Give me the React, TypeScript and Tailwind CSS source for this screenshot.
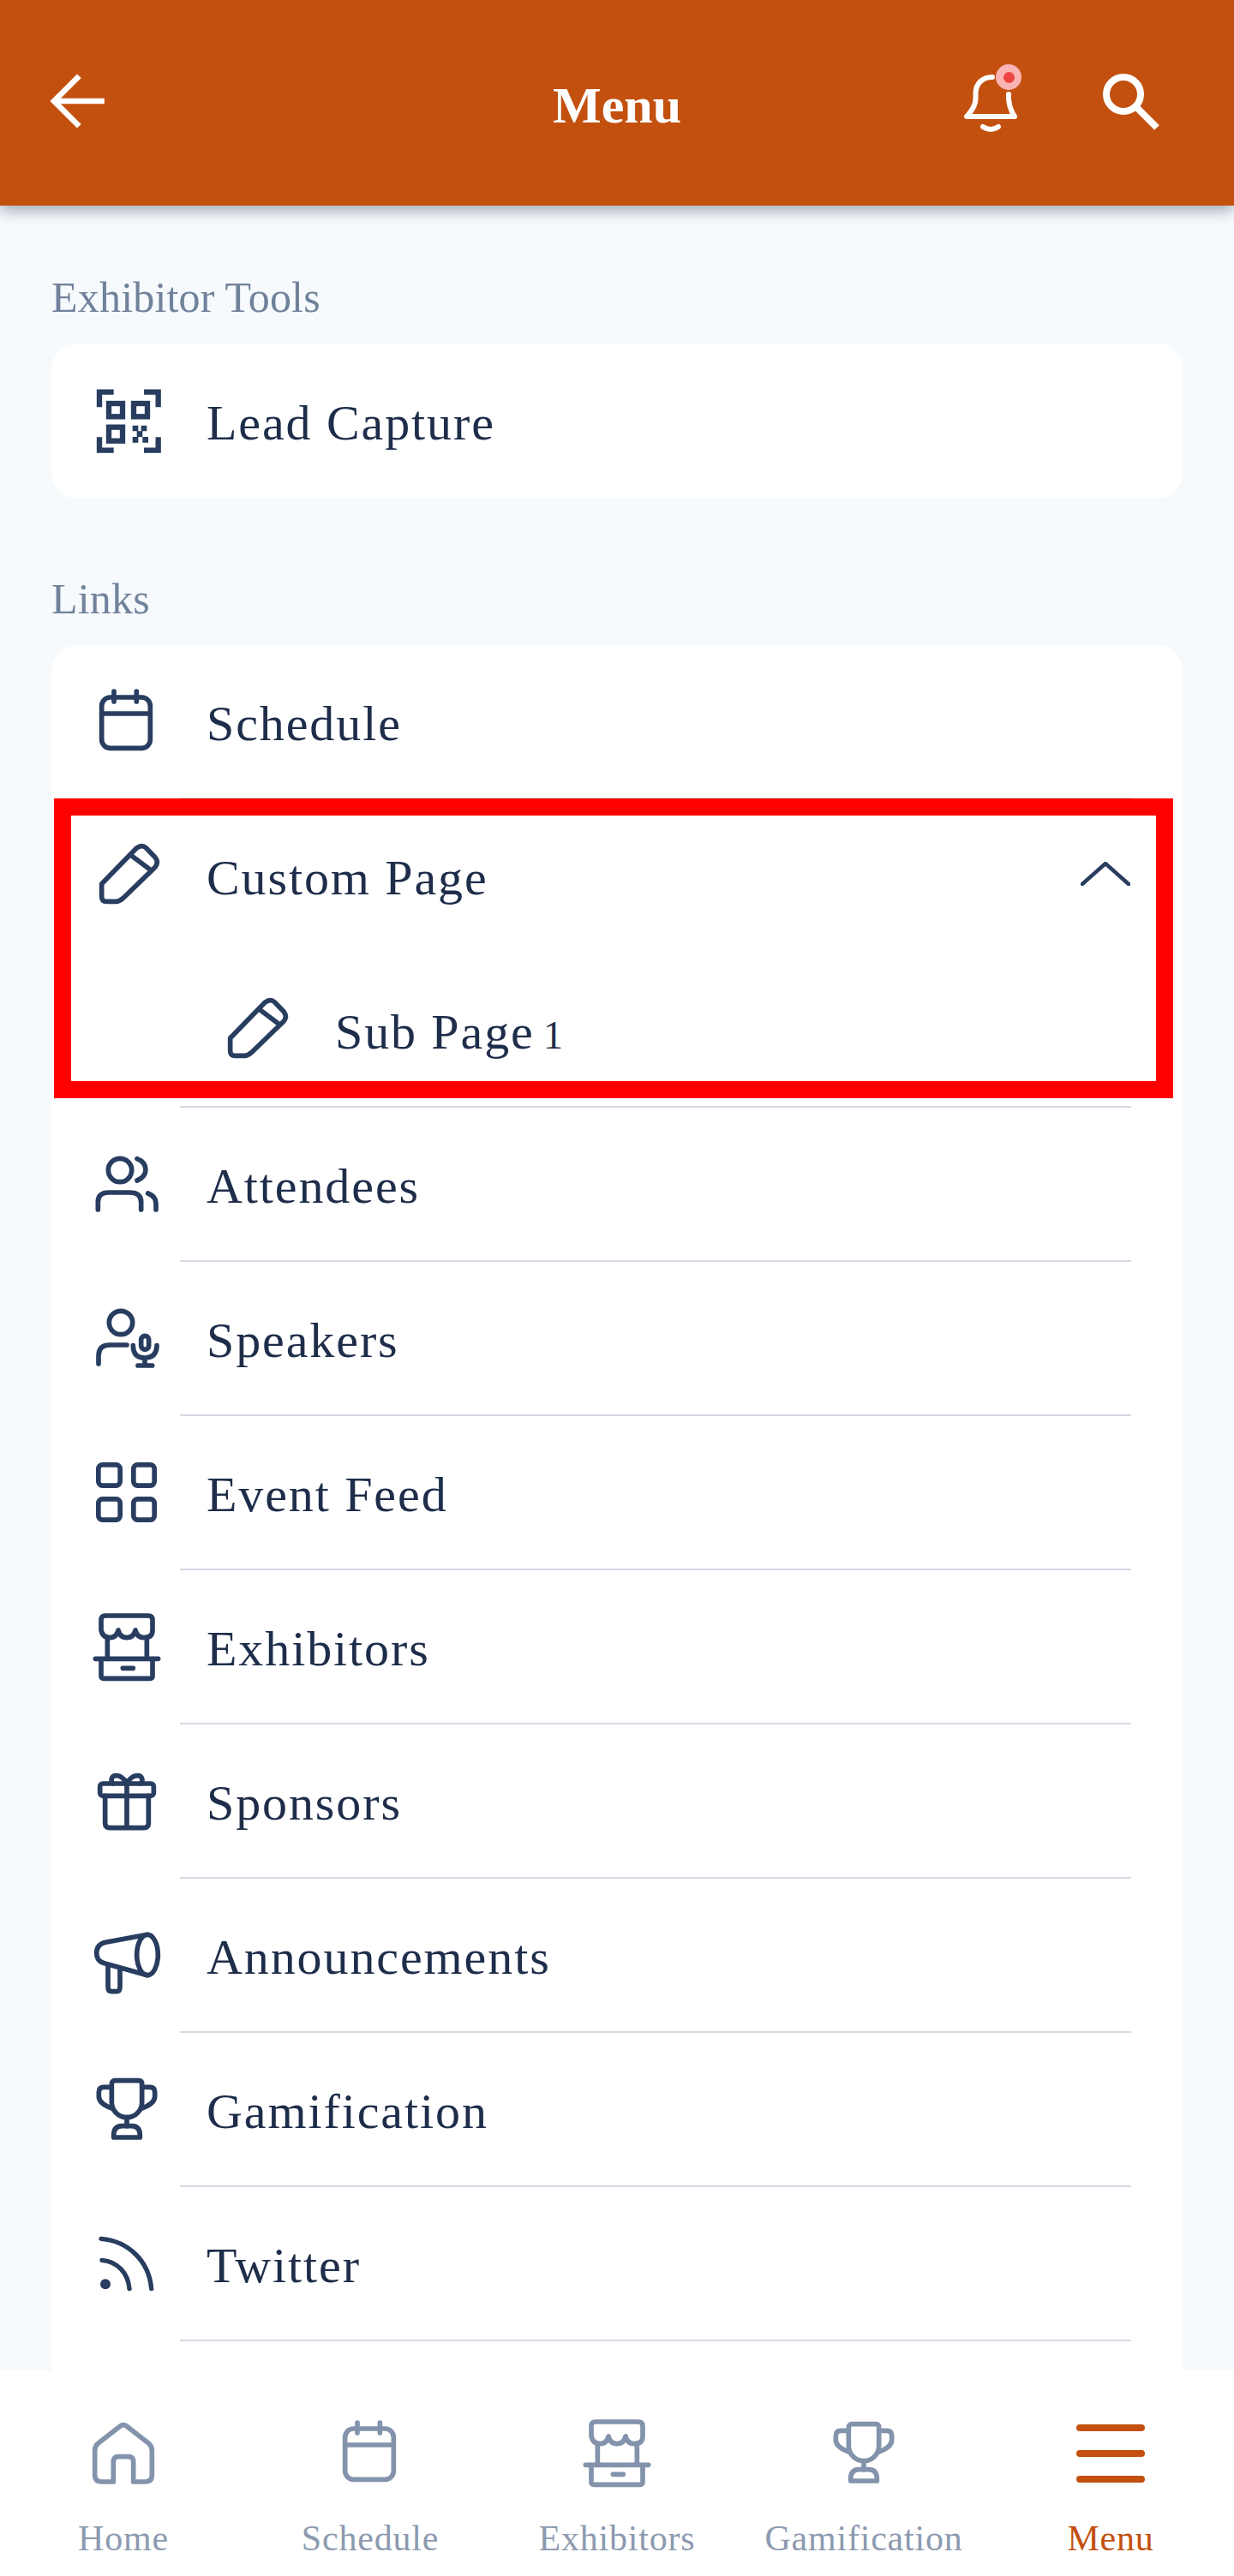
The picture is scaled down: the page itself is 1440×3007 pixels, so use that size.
import type { ReactNode } from "react";

const serif = "font-['Liberation_Serif','Times_New_Roman',serif]";

function Ico({ children, sw = 1.7 }: { children: ReactNode; sw?: number }) {
    return (
        <svg
            viewBox="0 0 24 24"
            fill="none"
            stroke="currentColor"
            strokeWidth={sw}
            strokeLinecap="round"
            strokeLinejoin="round"
            className="w-20 h-20 shrink-0 overflow-visible"
        >
            {children}
        </svg>
    );
}

const CalendarIcon = () => (
    <Ico>
        <rect x="3.2" y="3.3" width="17" height="17.8" rx="3" />
        <path d="M3.2 9h17M7.5 1.2v3.6M15.4 1.2v3.6" />
    </Ico>
);

const PencilIcon = () => (
    <Ico>
        <path d="M3.2 14.6 15.4 2.1q1.9-1.4 3.4 0l3.1 3.2q1.4 1.8 0 3.5L10.6 19.7q-1.2 1.1-2.4 1.1H4.9q-1.7 0-1.7-1.7z" />
        <path d="m13.4 4.6 7 5.2" />
    </Ico>
);

const UsersIcon = () => (
    <Ico>
        <circle cx="9.6" cy="6.9" r="4.1" />
        <path d="M15.6 2.9q3 1.2 3 3.8t-3 3.8M1.9 20.7V18q0-3.3 3.8-3.3h7.2q4.1 0 4.1 3.3v2.7M19.4 15q2.8 1.1 2.8 3.6v2.1" />
    </Ico>
);

const SpeakerIcon = () => (
    <Ico>
        <circle cx="9.9" cy="6.3" r="4.1" />
        <path d="M2.1 20.7V18q0-3.9 3.8-3.9H12" />
        <rect x="17" y="10.9" width="2.7" height="4.8" rx="1.35" />
        <path d="M14.2 14.3q0 4.3 4.1 4.3t4.2-4.3M18.3 18.6V21M15.9 21.3h5" />
    </Ico>
);

const GridIcon = () => (
    <Ico>
        <rect x="2.05" y="2.05" width="7.6" height="7.3" rx="1.4" />
        <rect x="14.35" y="2.05" width="7.3" height="7.3" rx="1.4" />
        <rect x="2.05" y="14.05" width="7.6" height="7.3" rx="1.4" />
        <rect x="14.35" y="14.05" width="7.3" height="7.3" rx="1.4" />
    </Ico>
);

const StoreIcon = () => (
    <Ico>
        <path d="M4.5.9h15Q21 .9 21 2.4V6q0 2.6-3 2.6-2.4 0-3-2.6-.6 2.6-3 2.6T9 6q-.6 2.6-3 2.6T3 6V2.4Q3 .9 4.5.9z" />
        <path d="M5.2 8.4V16M19 8.4V16M1 16h22M3 16v6q0 .9.9.9h16.2q.9 0 .9-.9v-6M10.6 19.3h3.6" />
    </Ico>
);

const GiftIcon = () => (
    <Ico>
        <rect x="2.6" y="5.7" width="18.8" height="4.3" rx="1" />
        <path d="M4.4 10v9.6q0 1.6 1.6 1.6h12q1.6 0 1.6-1.6V10M12 5.7v15.5" />
        <path d="M12 5.7C11 3.8 9.6 2.9 8.3 2.9c-1.6 0-2.2 1.6-1.2 2.8M12 5.7c1-1.9 2.4-2.8 3.7-2.8 1.6 0 2.2 1.6 1.2 2.8" />
    </Ico>
);

const MegaphoneIcon = () => (
    <Ico>
        <ellipse cx="19.2" cy="11.7" rx="3.7" ry="7.1" />
        <path d="M19.2 4.6 4.6 7.3Q1.4 8 1.4 11q0 3 3 3.7l14.8 4.1" />
        <path d="M5.4 15.6V23q0 1.5 1.4 1.5h1.5q1.3 0 1.3-1.5v-6.2" />
    </Ico>
);

const TrophyIcon = () => (
    <Ico>
        <path d="M6.7 2.9q0-1.2 1.2-1.2h8.2q1.2 0 1.2 1.2v6.4a5.3 5.3 0 0 1-10.6 0z" />
        <path d="M6.7 4H4q-1.8 0-1.8 1.8v1.5q0 2.6 4.9 4.3M17.3 4H20q1.8 0 1.8 1.8v1.5q0 2.6-4.9 4.3M12 14.6v3" />
        <path d="M7.4 21.6v-.8q0-3.2 3-3.2h3.2q3 0 3 3.2v.8z" />
    </Ico>
);

const FeedIcon = () => (
    <Ico sw={1.6}>
        <path d="M3 3.1C12.6 3.9 19.8 11 20.6 20.6M3.3 10.6c5.4.5 9.1 4.4 9.6 10" />
        <circle cx="4.5" cy="19" r="1.8" fill="currentColor" stroke="none" />
    </Ico>
);

const HomeIcon = () => (
    <Ico>
        <path d="M10.9 2.4q1.1-.8 2.2 0l7.7 6q1.2 1 1.2 2.5v8.7q0 2.3-2.3 2.3h-4.2v-7q0-1.8-1.8-1.8h-3.4q-1.8 0-1.8 1.8v7H4.3q-2.3 0-2.3-2.3v-8.7q0-1.5 1.2-2.5z" />
    </Ico>
);

const QrIcon = () => (
    <svg viewBox="0 0 24 24" className="w-20 h-20 shrink-0 overflow-visible" fill="none" stroke="currentColor" strokeWidth="1.9">
        <path d="M2.4 7V1.7h5M18 1.7h5V7M2.4 17.5v4.6h5M18 22.1h5v-4.6" />
        <rect x="5.7" y="5.7" width="4.8" height="4.6" />
        <rect x="14.4" y="5.7" width="4.8" height="4.6" />
        <rect x="5.7" y="14" width="4.8" height="4.8" />
        <path
            d="M14 13.4h2v2h-2zM17 13.4h2v2h-2zM15.5 15.4h2v2h-2zM14 17.4h2v2h-2zM17.5 17.4h2v2h-2z"
            fill="currentColor"
            stroke="none"
        />
    </svg>
);

function Row({ icon, label, indent, right }: { icon: ReactNode; label: ReactNode; indent?: boolean; right?: ReactNode }) {
    return (
        <div className={indent ? "flex items-center h-[178px] pt-[2px] pl-[198px]" : "flex items-center h-[178px] pt-[2px] pl-12"}>
            {icon}
            <span className="ml-[53px] pt-1 text-[58px] leading-none tracking-[1.9px] text-[#1e2d4a]">{label}</span>
            {right}
        </div>
    );
}

const Divider = () => <div className="ml-[150px] mr-[60px] h-[2px] bg-[#d6d9e3]" />;

const links = [
    { label: "Attendees", icon: <UsersIcon /> },
    { label: "Speakers", icon: <SpeakerIcon /> },
    { label: "Event Feed", icon: <GridIcon /> },
    { label: "Exhibitors", icon: <StoreIcon /> },
    { label: "Sponsors", icon: <GiftIcon /> },
    { label: "Announcements", icon: <MegaphoneIcon /> },
    { label: "Gamification", icon: <TrophyIcon /> },
    { label: "Twitter", icon: <FeedIcon /> },
];

const tabs = [
    { label: "Home", icon: <HomeIcon /> },
    { label: "Schedule", icon: <CalendarIcon /> },
    { label: "Exhibitors", icon: <StoreIcon /> },
    { label: "Gamification", icon: <TrophyIcon /> },
];

export default function App() {
    return (
        <div className={`${serif} flex flex-col w-[1440px] h-[3007px] overflow-hidden bg-[#f6fafd]`}>
            <header className="relative z-10 h-[240px] shrink-0 flex items-center justify-between bg-[#c3500f] text-white shadow-[0_6px_16px_rgba(40,50,70,0.4)]">
                <div className="ml-[52px] -mt-[4px]">
                    <svg viewBox="0 0 24 24" className="w-[76px] h-[76px]" fill="none" stroke="currentColor" strokeWidth="2.1" strokeLinecap="square">
                        <path d="M21 12H4M12 3.5 3.5 12l8.5 8.5" />
                    </svg>
                </div>
                <h1 className="absolute left-0 right-0 top-[87px] text-center text-[60px] leading-[72px] font-bold">Menu</h1>
                <div className="flex items-center gap-[97px] mr-[86px]">
                    <div className="relative">
                        <svg viewBox="0 0 64 68" className="w-16 h-[68px] overflow-visible" fill="none" stroke="currentColor" strokeWidth="6" strokeLinecap="round" strokeLinejoin="round">
                            <path d="M33 4C21 4 14 12 13.5 22v8C13 40 3 50 3 50h56s-6-8-7-20v-6" />
                            <path d="M22 62q9 6 18 0" />
                        </svg>
                        <div className="absolute left-[37px] -top-[11px] flex items-center justify-center w-[30px] h-[30px] rounded-full bg-[#fbb4b4]">
                            <div className="w-[13px] h-[13px] rounded-full bg-[#ef4444]" />
                        </div>
                    </div>
                    <svg viewBox="0 0 68 68" className="w-[68px] h-[68px]" fill="none" stroke="currentColor" strokeWidth="8">
                        <circle cx="25" cy="24" r="20" />
                        <path d="m40 39 24 24" />
                    </svg>
                </div>
            </header>

            <main className="flex-1 overflow-hidden px-[60px]">
                <p className="mt-[77px] text-[50px] leading-[60px] tracking-[0.2px] text-[#71829b]">Exhibitor Tools</p>
                <div className="mt-6 h-[181px] flex items-center rounded-[30px] bg-white text-[#283d5f]">
                    <div className="flex items-center pl-12">
                        <QrIcon />
                        <span className="ml-[53px] pt-1 text-[58px] leading-none tracking-[1.9px] text-[#1e2d4a]">Lead Capture</span>
                    </div>
                </div>

                <p className="mt-[87px] text-[50px] leading-[60px] tracking-[0.2px] text-[#71829b]">Links</p>
                <div className="relative mt-6 rounded-t-[30px] bg-white pb-10 text-[#283d5f]">
                    <Row icon={<CalendarIcon />} label="Schedule" />
                    <Divider />
                    <Row
                        icon={<PencilIcon />}
                        label="Custom Page"
                        right={
                            <svg viewBox="0 0 58 28" className="ml-auto mr-[61px] -mt-[6px] w-[58px] h-7" fill="none" stroke="currentColor" strokeWidth="4.5" strokeLinecap="round" strokeLinejoin="round">
                                <path d="m2 26 27-24 27 24" />
                            </svg>
                        }
                    />
                    <div className="h-[2px]" />
                    <Row
                        icon={<PencilIcon />}
                        label={
                            <>
                                Sub Page <span className="-ml-[6px] text-[46px]">1</span>
                            </>
                        }
                        indent
                    />
                    <Divider />
                    {links.map((link) => (
                        <div key={link.label}>
                            <Row icon={link.icon} label={link.label} />
                            <Divider />
                        </div>
                    ))}
                    {/* annotation box drawn over the list */}
                    <div className="absolute left-[3px] top-[179px] w-[1306px] h-[350px] border-[20px] border-[#ff0000]" />
                </div>
            </main>

            <nav className="relative z-10 h-[240px] shrink-0 grid grid-cols-5 bg-white">
                {tabs.map((tab) => (
                    <div key={tab.label} className="flex flex-col items-center pt-[57px] text-[#8393ab]">
                        {tab.icon}
                        <span className="mt-[35px] text-[42px] leading-[48px] tracking-[0.8px] text-[#8c9ab0]">{tab.label}</span>
                    </div>
                ))}
                <div className="flex flex-col items-center pt-[57px] text-[#c3500f]">
                    <div className="flex flex-col justify-center gap-[22px] w-20 h-20">
                        <div className="h-2 rounded-full bg-[#c3500f]" />
                        <div className="h-2 rounded-full bg-[#c3500f]" />
                        <div className="h-2 rounded-full bg-[#c3500f]" />
                    </div>
                    <span className="mt-[35px] text-[42px] leading-[48px] tracking-[0.8px]">Menu</span>
                </div>
            </nav>
        </div>
    );
}
